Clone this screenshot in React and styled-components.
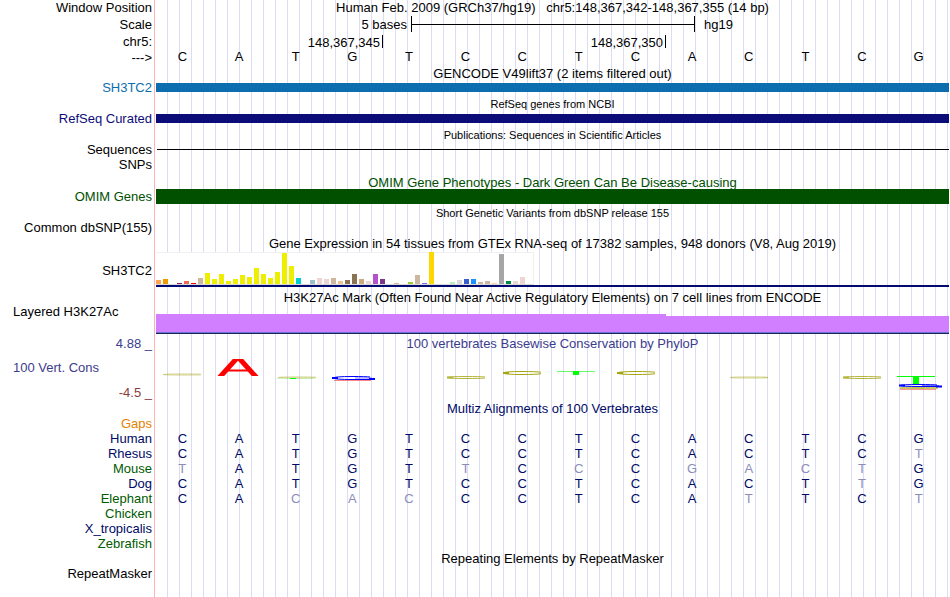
import React from "react";
import styled, { createGlobalStyle } from "styled-components";

const GlobalStyle = createGlobalStyle`
  * { box-sizing: border-box; }
  body {
    margin: 0;
    background: #fff;
    color: #000;
    font-family: "Liberation Sans", Arial, Helvetica, sans-serif;
    font-size: 13px;
  }
`;

const NAVY = "#000a66";
const GREEN = "#005a00";
const PHYLOP = "#3c3c8c";

const Browser = styled.main`
  min-height: 100vh;
  overflow: hidden;
  background:
    linear-gradient(#ffb4b4, #ffb4b4) 154px 0 / 1px 100% no-repeat,
    repeating-linear-gradient(to right, transparent 0 11px, #dcdcf5 11px 12px) 156px 0 no-repeat;
`;

const Track = styled.section`
  display: grid;
  grid-template-columns: 156px minmax(0, 1fr);
  padding-right: 1px;
  margin-bottom: ${(p) => p.$gap || 0}px;
  line-height: ${(p) => p.$h}px;
  min-height: ${(p) => p.$h}px;
`;

const Label = styled.div`
  padding-right: 4px;
  text-align: right;
  white-space: pre;
  color: ${(p) => p.$color || "#000"};
`;

const WideLabel = styled(Label)`
  padding-left: 13px;
  text-align: left;
`;

const TopLabel = styled(WideLabel)`
  line-height: 12px;
`;

const Title = styled.h2`
  grid-column: 2;
  margin: 0;
  font-size: ${(p) => (p.$small ? 11 : 13)}px;
  font-weight: 400;
  line-height: inherit;
  text-align: center;
  white-space: pre;
  color: ${(p) => p.$color || "#000"};
`;

const GeneBar = styled.div`
  align-self: start;
  height: ${(p) => p.$h}px;
  background: ${(p) => p.$color};
`;

const ItemLine = styled.div`
  align-self: center;
  height: 1px;
  margin-left: 1px;
  background: #000;
`;

const ScaleRow = styled.div`
  display: grid;
  grid-template-columns: 255fr 284fr 254fr;
  line-height: 17px;
`;

const ScaleStart = styled.span`
  padding-right: 4px;
  text-align: right;
`;

const ScaleEnd = styled.span`
  padding-left: 9px;
`;

const ScaleBar = styled.div`
  height: 16px;
  border: solid #000;
  border-width: 0 1px;
  background: linear-gradient(#000, #000) 0 8px / 100% 1px no-repeat;
`;

const Ruler = styled.div`
  display: grid;
  grid-template-columns: 227fr 283fr 283fr;
  padding: 2px 0;
`;

const Tick = styled.span`
  height: 13px;
  padding-right: 2px;
  border-right: 1px solid #000;
  line-height: 15px;
  text-align: right;
`;

const Bases = styled.div`
  display: grid;
  grid-template-columns: repeat(14, 1fr);
  margin: 0 2px 0 -2px;
  line-height: 13px;
  text-align: center;
`;

const Expression = styled.div`
  height: 35px;
  border-bottom: 2px solid #000a70;
`;

const Tissues = styled.div`
  display: flex;
  align-items: flex-end;
  gap: 2px;
  width: 378px;
  height: 33px;
  border: solid #f0f0f0;
  border-width: 1px 1px 1px 0;
  border-bottom-color: #d8d8d8;
  background: #fff;
`;

const Tissue = styled.span`
  flex: none;
  width: 5px;
  height: ${(p) => p.$h}px;
  background: ${(p) => p.$color};
`;

const Signal = styled.div`
  display: grid;
  grid-template-columns: 510fr 283fr;
  align-items: end;
  align-self: end;
  height: 20px;
  border-bottom: 1px solid #20205a;
`;

const SignalLevel = styled.div`
  height: ${(p) => p.$h}px;
  border-bottom: 1px solid #6478d2;
  background: #d17fff;
`;

const LogoLabels = styled.div`
  display: flex;
  flex-direction: column;
  justify-content: space-between;
  padding-top: 6px;
`;

const Logo = styled.svg`
  display: block;
  width: 100%;
  height: 49px;
`;

const Alignment = styled.table`
  width: calc(100% - 3px);
  table-layout: fixed;
  border-collapse: collapse;
  line-height: 15px;
`;

const Species = styled.th`
  width: 154px;
  padding: 0 2px 0 0;
  font-weight: 400;
  text-align: right;
  color: ${(p) => p.$color};
`;

const Base = styled.td`
  height: 15px;
  padding: 0;
  text-align: center;
  color: ${(p) => (p.$differs ? "#8c8cb9" : NAVY)};
`;

const tan = "#cdb79e";
const pink = "#eed5d2";
const yellow = "#eeee00";

const tissues = [
  [4, "#ffa54f"], [5, "#ee9a00"], [0], [1, "#8b1c62"], [3, "#ee6a50"], [1, "#ff0000"], [6, tan],
  [11, yellow], [5, yellow], [10, yellow], [3, yellow], [5, yellow], [9, yellow], [7, yellow],
  [16, yellow], [10, yellow], [6, yellow], [12, yellow], [31, yellow], [18, yellow],
  [6, "#00cdcd"], [0], [4, "#9ac0cd"], [6, pink], [5, pink], [6, tan], [3, "#eec591"],
  [4, "#8b7355"], [10, "#8b7355"], [5, "#cdaa7d"], [3, pink], [10, "#b452cd"], [5, "#7a378b"],
  [0], [1, tan], [0], [2, "#9acd32"], [9, tan], [1, "#7a67ee"], [32, "#ffd700"], [0], [0],
  [2, "#b4eeb4"], [4, "#d9d9d9"], [5, "#3a5fcd"], [5, "#1e90ff"], [2, tan], [3, tan],
  [1, "#ffd39b"], [30, "#a6a6a6"], [3, "#008b45"], [3, pink], [7, pink], [0],
];

const HUMAN = "CATGTCCTCACTCG";

const species = [
  ["Gaps", "#e68200", ""],
  ["Human", NAVY, HUMAN],
  ["Rhesus", NAVY, "CATGTCCTCACTCT"],
  ["Mouse", GREEN, "TATGTTCCCGACTG"],
  ["Dog", NAVY, "CATGTCCTCACTTG"],
  ["Elephant", GREEN, "CACACCCTCATTCT"],
  ["Chicken", GREEN, ""],
  ["X_tropicalis", NAVY, ""],
  ["Zebrafish", GREEN, ""],
];

/* A wide, flat ring open on its right side, thicker on the left. */
function FlatC({ x, y, h, opacity = 1 }) {
  const m = y + h / 2;
  return (
    <g fill="none" stroke="#a5a50f" opacity={opacity}>
      <path d={`M${x + 39} ${m - h / 4} Q${x + 34} ${y} ${x + 20} ${y} Q${x + 3} ${y} ${x + 1} ${m} Q${x + 3} ${y + h} ${x + 20} ${y + h} Q${x + 34} ${y + h} ${x + 39} ${m + h / 4}`} />
      <path d={`M${x + 1} ${m}H${x + 7}`} strokeWidth={Math.min(h, 2)} />
    </g>
  );
}

function FlatG({ x, y, h }) {
  const m = y + h / 2;
  return (
    <g fill="none" stroke="#0000ff">
      <path d={`M${x + 38} ${y + 0.5} Q${x + 34} ${y} ${x + 20} ${y} Q${x + 3} ${y} ${x + 1} ${m} Q${x + 3} ${y + h} ${x + 20} ${y + h} H${x + 38}`} />
      <path d={`M${x} ${m}H${x + 6}M${x + 37} ${m + 1}H${x + 43}`} strokeWidth="2" />
      <path d={`M${x + 23} ${m}H${x + 40}`} opacity="0.5" />
    </g>
  );
}

function ConservationLogo() {
  return (
    <Logo viewBox="0 1 793 49" preserveAspectRatio="none" aria-label="Conservation by base">
      <FlatC x={6} y={22} h={1} opacity={0.5} />
      <svg x="61" y="7" width="42" height="17" viewBox="0 0 42 17">
        <g stroke="#ff0000" fill="none">
          <path d="M2 19L21 -2M40 19L21 -2" strokeWidth="5" />
          <path d="M9 11.500H33" strokeWidth="2" />
        </g>
      </svg>
      <FlatC x={121} y={25} h={1} opacity={0.5} />
      <rect x="134" y="26" width="6" height="1" fill="#00ff00" />
      <rect x="120" y="26" width="38" height="1" fill="#00ff00" opacity="0.15" />
      <FlatG x={176} y={24.5} h={3} />
      <rect x="178" y="28" width="37" height="1" fill="#ff5050" opacity="0.7" />
      <FlatC x={290} y={24.5} h={2} opacity={0.8} />
      <FlatC x={346} y={19.5} h={3} />
      <rect x="401" y="19" width="38" height="1" fill="#00ff00" opacity="0.6" />
      <rect x="417" y="19" width="6" height="4" fill="#00ff00" />
      <FlatC x={460} y={19.5} h={3} />
      <FlatC x={573} y={25} h={1} opacity={0.5} />
      <FlatC x={686} y={24.5} h={2} opacity={0.8} />
      <rect x="741" y="24" width="38" height="1" fill="#00ff00" />
      <rect x="757" y="24" width="6" height="8" fill="#00ff00" />
      <FlatC x={743} y={35.5} h={1} opacity={0.7} />
      <rect x="744" y="37" width="36" height="1" fill="#ff5050" opacity="0.6" />
      <FlatG x={743} y={32.5} h={2} />
    </Logo>
  );
}

function TitleTrack({ h, small, color, children }) {
  return (
    <Track $h={h}>
      <Title $small={small} $color={color}>{children}</Title>
    </Track>
  );
}

export default function App() {
  return (
    <>
      <GlobalStyle />
      <Browser>
        <Track $h={16}>
          <Label>Window Position</Label>
          <Title>{"Human Feb. 2009 (GRCh37/hg19)   chr5:148,367,342-148,367,355 (14 bp)"}</Title>
        </Track>
        <Track $h={17}>
          <Label>Scale</Label>
          <ScaleRow>
            <ScaleStart>5 bases</ScaleStart>
            <ScaleBar />
            <ScaleEnd>hg19</ScaleEnd>
          </ScaleRow>
        </Track>
        <Track $h={17}>
          <Label>chr5:</Label>
          <Ruler>
            <Tick>148,367,345</Tick>
            <Tick>148,367,350</Tick>
          </Ruler>
        </Track>
        <Track $h={15}>
          <Label>{"--->"}</Label>
          <Bases>
            {[...HUMAN].map((base, i) => <span key={i}>{base}</span>)}
          </Bases>
        </Track>

        <TitleTrack h={18}>GENCODE V49lift37 (2 items filtered out)</TitleTrack>
        <Track $h={9} $gap={2}>
          <Label $color="#0c6eae">SH3TC2</Label>
          <GeneBar $h={9} $color="#0c6eae" />
        </Track>
        <TitleTrack h={20} small>RefSeq genes from NCBI</TitleTrack>
        <Track $h={9}>
          <Label $color="#0c0c78">RefSeq Curated</Label>
          <GeneBar $h={9} $color="#0c0c78" />
        </Track>
        <TitleTrack h={24} small>Publications: Sequences in Scientific Articles</TitleTrack>
        <Track $h={5} $gap={2}>
          <Label>Sequences</Label>
          <ItemLine />
        </Track>
        <Track $h={22}>
          <Label>SNPs</Label>
        </Track>
        <TitleTrack h={13} color="#005000">OMIM Gene Phenotypes - Dark Green Can Be Disease-causing</TitleTrack>
        <Track $h={15}>
          <Label $color="#005000">OMIM Genes</Label>
          <GeneBar $h={15} $color="#005000" />
        </Track>
        <TitleTrack h={18} small>Short Genetic Variants from dbSNP release 155</TitleTrack>
        <Track $h={12} $gap={2}>
          <Label>Common dbSNP(155)</Label>
        </Track>
        <TitleTrack h={16}>Gene Expression in 54 tissues from GTEx RNA-seq of 17382 samples, 948 donors (V8, Aug 2019)</TitleTrack>
        <Track $h={38}>
          <Label>SH3TC2</Label>
          <Expression>
            <Tissues>
              {tissues.map(([h, color], i) => <Tissue key={i} $h={h} $color={color} />)}
            </Tissues>
          </Expression>
        </Track>
        <TitleTrack h={16}>H3K27Ac Mark (Often Found Near Active Regulatory Elements) on 7 cell lines from ENCODE</TitleTrack>
        <Track $h={28}>
          <TopLabel>Layered H3K27Ac</TopLabel>
          <Signal>
            <SignalLevel $h={19} />
            <SignalLevel $h={17} />
          </Signal>
        </Track>
        <Track $h={19}>
          <Label $color={PHYLOP}>4.88 _</Label>
          <Title $color={PHYLOP}>100 vertebrates Basewise Conservation by PhyloP</Title>
        </Track>
        <Track $h={18}>
          <LogoLabels>
            <WideLabel $color={PHYLOP}>100 Vert. Cons</WideLabel>
            <Label $color="#8c3c3c">-4.5 _</Label>
          </LogoLabels>
          <ConservationLogo />
        </Track>
        <TitleTrack h={14} color={NAVY}>Multiz Alignments of 100 Vertebrates</TitleTrack>
        <Alignment>
          <tbody>
            {species.map(([name, color, bases]) => (
              <tr key={name}>
                <Species scope="row" $color={color}>{name}</Species>
                {[...HUMAN].map((ref, i) => (
                  <Base key={i} $differs={bases[i] !== ref}>{bases[i]}</Base>
                ))}
              </tr>
            ))}
          </tbody>
        </Alignment>
        <TitleTrack h={16}>Repeating Elements by RepeatMasker</TitleTrack>
        <Track $h={14}>
          <Label>RepeatMasker</Label>
        </Track>
      </Browser>
    </>
  );
}
